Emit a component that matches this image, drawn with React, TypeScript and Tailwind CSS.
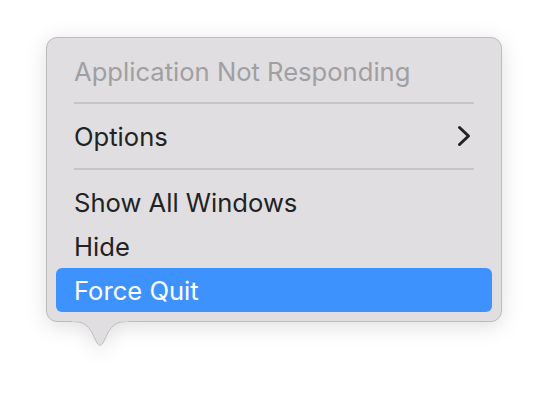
import React from "react";

const font = { fontFamily: "Inter, 'Noto Sans', 'Liberation Sans', sans-serif" };

function Row({ label, selected = false, disabled = false, chevron = false }: { label: string; selected?: boolean; disabled?: boolean; chevron?: boolean }) {
  return (
    <div
      className={
        "flex h-[44px] items-center justify-between rounded-[6px] pl-[18px] pr-[21px] text-[25.6px] leading-none " +
        (selected ? "bg-[#3e92fe] text-white" : disabled ? "text-[#a09fa2]" : "text-[#222222]")
      }
    >
      <span className="pt-[2px]">{label}</span>
      {chevron && (
        <svg width="14" height="22" viewBox="0 0 14 22" className="block">
          <polyline points="2.5,2.5 11.5,11 2.5,19.5" fill="none" stroke="#222222" strokeWidth="3" strokeLinecap="round" strokeLinejoin="round" />
        </svg>
      )}
    </div>
  );
}

function Sep({ top, bottom }: { top: string; bottom: string }) {
  return <div className={"mx-[18px] h-[2px] bg-[#c6c4c7] " + top + " " + bottom} />;
}

export default function App() {
  return (
    <div className="h-[404px] w-[548px] bg-white pl-[46px] pt-[37px]" style={font}>
      <div className="relative w-[456px] drop-shadow-[0_4px_10px_rgba(0,0,0,0.13)]">
        <div className="rounded-[11px] border border-[#bcbbbd] bg-[#e0dee1] px-[9px] pb-[9px] pt-[11px]">
          <Row label="Application Not Responding" disabled />
          <Sep top="mt-[9px]" bottom="mb-[10px]" />
          <Row label="Options" chevron />
          <Sep top="mt-[10px]" bottom="mb-[10px]" />
          <Row label="Show All Windows" />
          <Row label="Hide" />
          <Row label="Force Quit" selected />
        </div>
        <svg
          width="56"
          height="28"
          viewBox="0 0 56 28"
          className="absolute left-[26px] top-full -mt-[1px] block"
        >
          <path
            d="M0,0 C11,0 15,3 20,11 L25,21.5 Q28,26 31,21.5 L36,11 C41,3 45,0 56,0 Z"
            fill="#e0dee1"
          />
          <path
            d="M0,0.5 C11,0.5 15,3.5 20,11.5 L25,22 Q28,26.5 31,22 L36,11.5 C41,3.5 45,0.5 56,0.5"
            fill="none"
            stroke="#bcbbbd"
            strokeWidth="1"
          />
          <rect x="0" y="0" width="56" height="0.6" fill="#e0dee1" />
        </svg>
      </div>
    </div>
  );
}
